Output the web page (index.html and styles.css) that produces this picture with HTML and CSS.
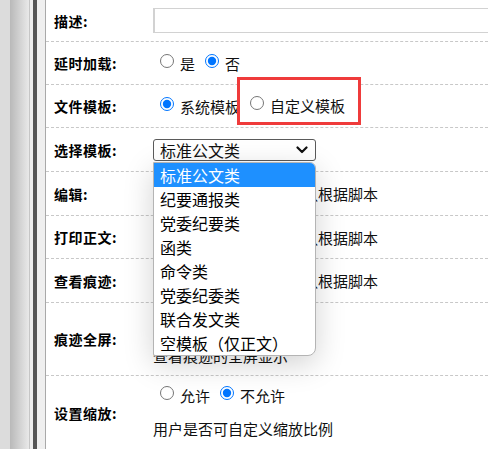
FILE: index.html
```html
<!DOCTYPE html>
<html lang="zh-CN">
<head>
<meta charset="utf-8">
<title>模板设置</title>
<link rel="stylesheet" href="styles.css">
</head>
<body>
<div class="page">
  <div class="sidebar">
    <span class="s1"></span><span class="s2"></span><span class="s3"></span><span class="s4"></span><span class="s5"></span><span class="s6"></span><span class="s7"></span>
  </div>
  <div class="form">
    <div class="row h42">
      <div class="label">描述:</div>
      <div class="field"><div class="textbox"></div></div>
    </div>
    <div class="row h43">
      <div class="label">延时加载:</div>
      <div class="field">
        <label class="opt"><input type="radio" name="delay">是</label>
        <label class="opt"><input type="radio" name="delay" checked>否</label>
      </div>
    </div>
    <div class="row h43">
      <div class="label">文件模板:</div>
      <div class="field">
        <label class="opt"><input type="radio" name="tpl" checked>系统模板</label>
        <label class="opt mark"><input type="radio" name="tpl">自定义模板</label>
      </div>
    </div>
    <div class="row h44">
      <div class="label">选择模板:</div>
      <div class="field">
        <div class="select">
          <span class="select-value">标准公文类</span>
          <svg class="chevron" width="12" height="8" viewBox="0 0 12 8"><path d="M1.5 1.5 L6 6 L10.5 1.5" fill="none" stroke="#111" stroke-width="2.2" stroke-linecap="round" stroke-linejoin="round"/></svg>
          <ul class="dropdown">
            <li class="active">标准公文类</li>
            <li>纪要通报类</li>
            <li>党委纪要类</li>
            <li>函类</li>
            <li>命令类</li>
            <li>党委纪委类</li>
            <li>联合发文类</li>
            <li>空模板（仅正文）</li>
          </ul>
        </div>
      </div>
    </div>
    <div class="row h44">
      <div class="label">编辑:</div>
      <div class="field">允许编辑正文内容，默认根据脚本</div>
    </div>
    <div class="row h43">
      <div class="label">打印正文:</div>
      <div class="field">允许打印正文内容，默认根据脚本</div>
    </div>
    <div class="row h44">
      <div class="label">查看痕迹:</div>
      <div class="field">允许查看修改痕迹，默认根据脚本</div>
    </div>
    <div class="row h73">
      <div class="label">痕迹全屏:</div>
      <div class="field stack">
        <div class="line">
          <label class="opt"><input type="radio" name="full">允许</label>
          <label class="opt"><input type="radio" name="full" checked>不允许</label>
        </div>
        <div class="line">查看痕迹的全屏显示</div>
      </div>
    </div>
    <div class="row h74">
      <div class="label">设置缩放:</div>
      <div class="field stack">
        <div class="line">
          <label class="opt"><input type="radio" name="zoom">允许</label>
          <label class="opt"><input type="radio" name="zoom" checked>不允许</label>
        </div>
        <div class="line">用户是否可自定义缩放比例</div>
      </div>
    </div>
  </div>
</div>
</body>
</html>
```
FILE: styles.css
```css
html, body {
  margin: 0;
  padding: 0;
}
body {
  font-family: "Noto Sans CJK SC", "Microsoft YaHei", sans-serif;
  color: #111;
  background: #fff;
  overflow: hidden;
}
.page {
  display: flex;
  height: 449px;
  overflow: hidden;
}
.sidebar {
  display: flex;
  flex: none;
}
.sidebar span { display: block; }
.s1 { width: 10px; background: #dcdcdc; }
.s2 { width: 19px; background: linear-gradient(to right, #b9b9b9, #e9e9e9); }
.s3 { width: 1px; background: #c6c6c6; }
.s4 { width: 3px; background: #ededed; }
.s5 { width: 4px; background: #555555; }
.s6 { width: 8px; background: #efefef; }
.s7 { width: 1px; background: #a9a9a9; }

.form {
  flex: 1;
  min-width: 0;
}
.row {
  display: flex;
  box-sizing: border-box;
  border-bottom: 1px dashed #c8c8c8;
}
.h42 { height: 42px; }
.h43 { height: 43px; }
.h44 { height: 44px; }
.h73 { height: 73px; }
.h74 { height: 74px; }

.label {
  width: 107px;
  flex: none;
  box-sizing: border-box;
  padding-left: 8px;
  display: flex;
  align-items: center;
  font-size: 14px;
  font-weight: bold;
  letter-spacing: 0.5px;
  color: #000;
}
.field {
  flex: 1;
  min-width: 0;
  display: flex;
  align-items: center;
  font-size: 15px;
  white-space: nowrap;
  color: #111;
}
.field.stack {
  flex-direction: column;
  align-items: flex-start;
  box-sizing: border-box;
  padding-top: 6px;
  gap: 6px;
}
.line {
  height: 27px;
  display: flex;
  align-items: center;
}
.textbox {
  width: 420px;
  height: 25px;
  box-sizing: border-box;
  border: 1px solid #d2d2d2;
  border-left-width: 2px;
  background: #fff;
  flex: none;
}
.opt {
  display: inline-flex;
  align-items: center;
  margin-right: 3px;
}
.opt input {
  width: 14px;
  height: 14px;
  margin: 0 6px 5px 7px;
}
.opt.mark {
  position: relative;
  z-index: 1;
  box-sizing: border-box;
  height: 48px;
  margin: -10px 0 0 -6px;
  padding: 9px 13px 0 10px;
  border: 3px solid #ef3b3b;
  background: #fff;
}
.opt.mark input {
  margin-left: 0;
}

.select {
  position: relative;
  width: 163px;
  height: 22px;
  box-sizing: border-box;
  border: 1px solid #5a5a5a;
  border-radius: 3px;
  background: #fff;
  display: flex;
  align-items: center;
  padding: 0 7px 0 6px;
  font-size: 16px;
  color: #111;
}
.select-value {
  flex: 1;
}
.chevron {
  flex: none;
}
.dropdown {
  position: absolute;
  z-index: 10;
  left: -1px;
  top: 22px;
  width: 163px;
  box-sizing: border-box;
  margin: 0;
  padding: 0;
  list-style: none;
  background: #fff;
  border: 1px solid #b4b4b4;
  border-radius: 0 6px 8px 2px;
  box-shadow: 0 8px 30px rgba(0, 0, 0, 0.18);
  overflow: hidden;
}
.dropdown li {
  height: 24px;
  line-height: 24px;
  padding-left: 6px;
  font-size: 16px;
  color: #000;
}
.dropdown li.active {
  background: #1e90ff;
  color: #fff;
}
```
